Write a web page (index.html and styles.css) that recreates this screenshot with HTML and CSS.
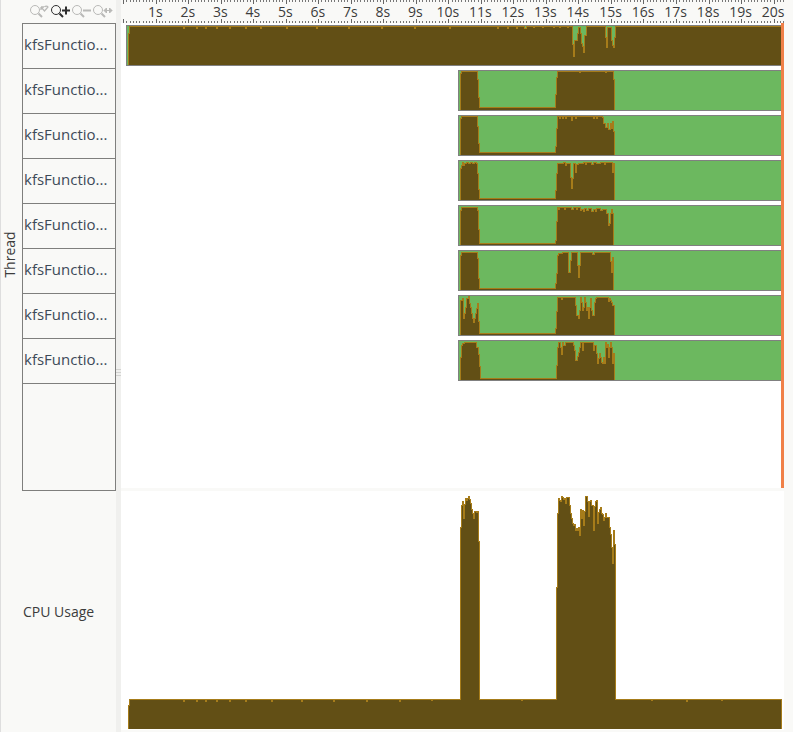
FILE: index.html
```html
<!DOCTYPE html>
<html lang="en">
<head>
    <meta charset="UTF-8">
    <title>Thread timeline</title>
    <link rel="stylesheet" href="styles.css">
</head>
<body>
    <svg width="0" height="0" class="defs">
        <symbol id="lens" viewBox="0 0 14 14">
            <circle cx="6" cy="6" r="4.500" fill="none" stroke="currentColor"/>
            <path d="M9.500 9.500L13 13" stroke="currentColor" stroke-width="2"/>
        </symbol>
    </svg>
    <div class="app">
        <aside class="side">
            <div class="toolbar">
                <svg class="tool off" width="21" height="14" viewBox="0 0 21 14"><use href="#lens" width="14" height="14"/><path d="M12 3l3.500 4 3.500-4c-1-1.500-3-1-3.500 0M12 3v3M12 3h3" fill="none" stroke="currentColor" stroke-width="1.300"/></svg>
                <svg class="tool on" width="21" height="14" viewBox="0 0 21 14"><use href="#lens" width="14" height="14"/><path d="M12 6.500h8M16 2.500v8" fill="none" stroke="currentColor" stroke-width="2"/></svg>
                <svg class="tool off" width="21" height="14" viewBox="0 0 21 14"><use href="#lens" width="14" height="14"/><path d="M12 6.500h8" fill="none" stroke="currentColor" stroke-width="2"/></svg>
                <svg class="tool off" width="21" height="14" viewBox="0 0 21 14"><use href="#lens" width="14" height="14"/><path d="M12 6.500h8M14.500 4l-2.500 2.500 2.500 2.500zM17.500 4l2.500 2.500-2.500 2.500z" fill="currentColor" stroke="currentColor"/></svg>
            </div>
            <div class="thread-panel">
                <div class="axis-label"><span>Thread</span></div>
                <div class="names">
                    <div class="name">kfsFunctio...</div>
                    <div class="name">kfsFunctio...</div>
                    <div class="name">kfsFunctio...</div>
                    <div class="name">kfsFunctio...</div>
                    <div class="name">kfsFunctio...</div>
                    <div class="name">kfsFunctio...</div>
                    <div class="name">kfsFunctio...</div>
                    <div class="name">kfsFunctio...</div>
                    <div class="name name-empty"></div>
                </div>
            </div>
            <div class="cpu-label">CPU Usage</div>
        </aside>
        <div class="splitter"><div class="grip"></div></div>
        <main class="main">
            <div class="ruler">
                <span>1s</span><span>2s</span><span>3s</span><span>4s</span><span>5s</span>
                <span>6s</span><span>7s</span><span>8s</span><span>9s</span><span>10s</span>
                <span>11s</span><span>12s</span><span>13s</span><span>14s</span><span>15s</span>
                <span>16s</span><span>17s</span><span>18s</span><span>19s</span><span>20s</span>
            </div>
            <div class="lanes">
                <svg class="lane lane-full" width="656" height="41" viewBox="0 0 656 41" shape-rendering="crispEdges">
                    <rect class="bg" x="0.500" y="0.500" width="670" height="40"/>
                    <path class="load" d="M2 39V8H3V1H57V3H58V1H70V3H71V1H79V3H80V1H90V3H91V1H103V3H104V1H119V3H120V1H134V3H135V1H160V3H161V1H190V3H191V1H222V3H223V1H255V3H256V1H288V3H289V1H323V3H324V1H371V3H372V1H381V3H382V1H390V3H391V1H398V3H400V1H407V2H408V1H416V2H417V1H427V2H428V1H433V2H434V1H441V2H442V1H446V19H447V31H448V15H450V15H451V8H452V2H454V8H455V18H456V21H457V27H458V10H460V1H479V12H480V22H481V2H484V2H485V15H486V20H487V22H488V12H489V1H655V39"/>
                </svg>
                <svg class="lane" width="324" height="41" viewBox="0 0 324 41" shape-rendering="crispEdges">
                    <rect class="bg" x="0.500" y="0.500" width="340" height="40"/>
                    <path class="load" d="M2 39V3H3V1H19V9H20V27H21V37H97V24H98V7H99V1H121V2H122V1H147V2H148V1H155V9H156V39"/>
                </svg>
                <svg class="lane" width="324" height="41" viewBox="0 0 324 41" shape-rendering="crispEdges">
                    <rect class="bg" x="0.500" y="0.500" width="340" height="40"/>
                    <path class="load" d="M2 39V3H3V1H19V11H20V28H21V37H97V31H98V13H99V1H101V3H102V1H104V3H105V1H107V3H108V1H113V5H114V1H117V3H118V1H135V3H136V1H138V3H139V1H144V2H145V8H147V12H149V8H150V14H152V8H153V13H154V6H155V16H156V39"/>
                </svg>
                <svg class="lane" width="324" height="41" viewBox="0 0 324 41" shape-rendering="crispEdges">
                    <rect class="bg" x="0.500" y="0.500" width="340" height="40"/>
                    <path class="load" d="M2 39V8H3V5H4V2H5V5H6V3H8V2H10V3H12V2H14V3H16V2H18V3H19V13H20V29H21V38H97V30H98V13H99V3H105V2H107V5H108V3H112V17H113V28H114V18H115V3H117V12H118V4H120V3H125V2H127V4H128V2H133V4H135V2H138V3H142V2H146V4H147V2H154V12H155V3H156V39"/>
                </svg>
                <svg class="lane" width="324" height="41" viewBox="0 0 324 41" shape-rendering="crispEdges">
                    <rect class="bg" x="0.500" y="0.500" width="340" height="40"/>
                    <path class="load" d="M2 39V5H3V2H19V5H20V24H21V38H97V35H98V16H99V2H100V4H101V2H106V4H107V2H113V4H115V2H118V4H119V2H122V5H123V4H125V6H126V3H128V5H130V3H133V6H135V4H137V6H138V3H142V5H144V4H148V8H150V20H151V18H152V8H153V4H154V8H155V39"/>
                </svg>
                <svg class="lane" width="324" height="41" viewBox="0 0 324 41" shape-rendering="crispEdges">
                    <rect class="bg" x="0.500" y="0.500" width="340" height="40"/>
                    <path class="load" d="M2 39V5H3V2H19V8H20V28H21V38H97V33H98V23H99V5H100V3H104V2H110V22H112V10H113V2H119V15H120V27H121V15H122V2H134V4H136V2H152V11H153V22H154V7H155V39"/>
                </svg>
                <svg class="lane" width="324" height="41" viewBox="0 0 324 41" shape-rendering="crispEdges">
                    <rect class="bg" x="0.500" y="0.500" width="340" height="40"/>
                    <path class="load" d="M2 39V5H4V3H5V23H6V18H7V12H8V3H10V1H11V8H12V12H13V18H14V23H15V27H16V23H17V18H18V13H19V8H20V26H21V38H97V33H98V16H99V2H103V4H104V2H117V10H118V20H120V23H121V15H122V2H123V7H124V15H125V12H126V2H127V7H128V15H129V12H130V23H131V12H132V3H133V15H134V20H136V7H137V3H138V2H150V6H151V3H152V5H153V7H154V10H156V39"/>
                </svg>
                <svg class="lane" width="324" height="41" viewBox="0 0 324 41" shape-rendering="crispEdges">
                    <rect class="bg" x="0.500" y="0.500" width="340" height="40"/>
                    <path class="load" d="M2 39V17H3V5H4V3H6V2H18V7H20V14H21V26H22V38H98V25H99V7H100V2H102V7H103V14H104V2H105V5H107V2H115V5H116V10H117V20H119V16H120V12H121V7H122V2H124V10H125V2H135V10H136V5H138V13H139V23H140V18H141V13H142V17H143V22H144V23H145V17H146V23H147V2H148V7H149V4H150V17H151V7H152V2H153V7H154V23H155V13H156V39"/>
                </svg>
            </div>
            <div class="marker"></div>
            <div class="cpu-gap"></div>
            <div class="cpu">
                <svg width="663" height="239" viewBox="0 0 663 239" shape-rendering="crispEdges">
                    <path class="load" d="M7 237V214H8V208H62V210H63V208H75V210H76V208H84V210H85V208H95V210H96V208H108V210H109V208H124V210H125V208H150V210H151V208H180V210H181V208H212V210H213V208H245V210H246V208H278V210H279V208H310V209H311V208H339V36H340V14H341V10H342V27H343V13H344V7H345V9H346V7H347V5H348V8H349V12H350V18H351V22H352V27H353V20H355V21H356V20H357V50H358V208H400V209H401V208H435V96H436V22H437V7H438V9H439V10H440V5H441V6H442V8H443V7H444V12H445V6H448V14H449V22H450V27H451V32H452V34H453V33H454V39H455V37H456V39H457V36H458V44H459V18H460V27H461V19H462V34H463V20H464V5H466V10H467V25H468V10H469V9H470V14H472V39H473V15H474V10H475V9H476V32H477V21H478V18H479V16H480V22H481V23H482V29H483V26H484V22H485V26H488V36H489V43H490V56H491V72H492V39H493V53H494V208H530V209H531V208H565V210H566V208H600V209H601V208H660V237"/>
                </svg>
            </div>
        </main>
    </div>
</body>
</html>
```
FILE: styles.css
```css
* {
    box-sizing: border-box;
}
html, body {
    margin: 0;
    height: 100%;
}
body {
    font-family: "Open Sans", sans-serif;
    background-color: #f9f9f7;
    overflow: hidden;
}
.defs {
    position: absolute;
}
.app {
    display: flex;
    width: 793px;
    height: 732px;
    border-left: 1px solid #dedede;
}
.side {
    width: 115px;
    flex: none;
}
.toolbar {
    display: flex;
    height: 23px;
    padding: 4px 0 0 28px;
}
.tool {
    flex: none;
}
.tool.off {
    color: #b9b9b7;
}
.tool.on {
    color: #2e2e2e;
}
.thread-panel {
    display: flex;
    height: 468px;
}
.axis-label {
    width: 21px;
    padding: 0 4px 6px 0;
    display: flex;
    align-items: center;
    justify-content: center;
}
.axis-label span {
    transform: rotate(-90deg);
    font-size: 14px;
    color: #3c3c3c;
}
.names {
    width: 94px;
    border: 1px solid #7f7f7d;
    display: flex;
    flex-direction: column;
}
.name {
    height: 45px;
    border-bottom: 1px solid #7f7f7d;
    font-size: 15px;
    line-height: 41px;
    padding-left: 1px;
    color: #3d4a58;
    white-space: nowrap;
}
.name-empty {
    flex: 1;
    border-bottom: 0;
}
.cpu-label {
    padding: 111px 0 0 22px;
    font-size: 14px;
    color: #3c3c3c;
}
.splitter {
    width: 5px;
    flex: none;
    background-color: #f0f0ee;
    padding-top: 369px;
}
.grip {
    height: 7px;
    background-image: repeating-linear-gradient(180deg, #d2d2d0 0 1px, transparent 1px 3px);
}
.main {
    position: relative;
    width: 663px;
    flex: none;
}
.ruler {
    display: grid;
    grid-template-columns: repeat(20, 32.530px);
    height: 23px;
    margin-left: 2px;
    padding-left: 16px;
    font-size: 14px;
    line-height: 23px;
    color: #3c3c3c;
    text-align: center;
    background-image:
        repeating-linear-gradient(90deg, #666 0 1px, transparent 1px 32.530px),
        repeating-linear-gradient(90deg, #666 0 1px, transparent 1px 32.530px),
        repeating-linear-gradient(90deg, #777 0 1px, transparent 1px 3.253px),
        repeating-linear-gradient(90deg, #777 0 1px, transparent 1px 3.253px);
    background-size: 100% 4px, 100% 4px, 100% 2px, 100% 2px;
    background-position: 0 0, 0 19px, 0 0, 0 21px;
    background-repeat: no-repeat;
}
.lanes {
    height: 465px;
    background-color: #fff;
    padding-top: 2px;
    display: flex;
    flex-direction: column;
    align-items: flex-start;
    gap: 4px;
}
.lane {
    display: block;
    flex: none;
    margin-left: 337px;
}
.lane-full {
    margin-left: 5px;
}
.bg {
    fill: #6cb85f;
    stroke: #808080;
}
.load {
    fill: #624f15;
    stroke: #a67c1a;
    transform: translate(0.500px, 0.500px);
}
.marker {
    position: absolute;
    top: 23px;
    right: 0;
    width: 3px;
    height: 465px;
    background-color: #f08048;
}
.cpu-gap {
    height: 3px;
}
.cpu {
    height: 239px;
    background-color: #fff;
}
.cpu svg {
    display: block;
}
```
